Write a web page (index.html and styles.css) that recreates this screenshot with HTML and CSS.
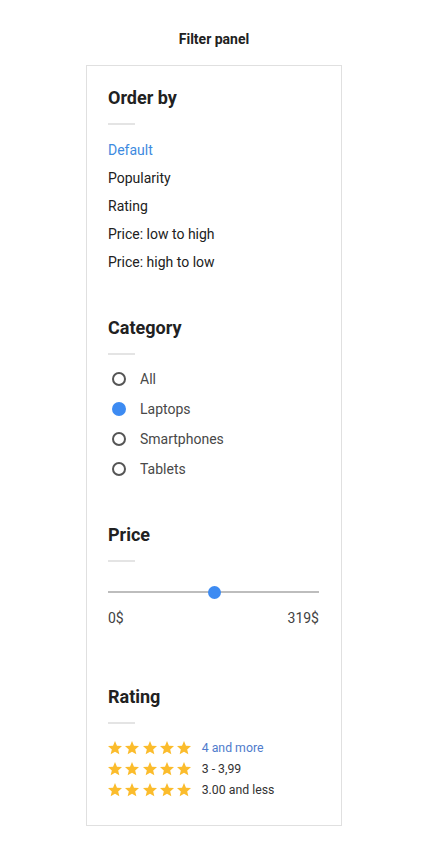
FILE: index.html
```html
<!DOCTYPE html>
<html lang="en">
<head>
<meta charset="utf-8">
<title>Filter panel</title>
<link rel="stylesheet" href="styles.css">
</head>
<body>
<h1 class="page-title">Filter panel</h1>
<div class="panel">
  <section class="section">
    <h2 class="section-title">Order by</h2>
    <div class="divider"></div>
    <ul class="order-list">
      <li class="order-item active">Default</li>
      <li class="order-item">Popularity</li>
      <li class="order-item">Rating</li>
      <li class="order-item">Price: low to high</li>
      <li class="order-item">Price: high to low</li>
    </ul>
  </section>

  <section class="section section-category">
    <h2 class="section-title">Category</h2>
    <div class="divider"></div>
    <ul class="radio-list">
      <li class="radio-item"><span class="radio"></span><span class="radio-label">All</span></li>
      <li class="radio-item"><span class="radio checked"></span><span class="radio-label">Laptops</span></li>
      <li class="radio-item"><span class="radio"></span><span class="radio-label">Smartphones</span></li>
      <li class="radio-item"><span class="radio"></span><span class="radio-label">Tablets</span></li>
    </ul>
  </section>

  <section class="section section-price">
    <h2 class="section-title">Price</h2>
    <div class="divider"></div>
    <div class="slider">
      <div class="track"></div>
      <div class="thumb"></div>
    </div>
    <div class="range-labels"><span>0$</span><span>319$</span></div>
  </section>

  <section class="section section-rating">
    <h2 class="section-title">Rating</h2>
    <div class="divider"></div>
    <ul class="rating-list">
      <li class="rating-item">
        <span class="stars">
          <svg class="star" viewBox="2 2 20 20"><path d="M12 17.27L18.18 21l-1.64-7.03L22 9.24l-7.19-.61L12 2 9.19 8.63 2 9.24l5.46 4.73L5.82 21z"/></svg>
          <svg class="star" viewBox="2 2 20 20"><path d="M12 17.27L18.18 21l-1.64-7.03L22 9.24l-7.19-.61L12 2 9.19 8.63 2 9.24l5.46 4.73L5.82 21z"/></svg>
          <svg class="star" viewBox="2 2 20 20"><path d="M12 17.27L18.18 21l-1.64-7.03L22 9.24l-7.19-.61L12 2 9.19 8.63 2 9.24l5.46 4.73L5.82 21z"/></svg>
          <svg class="star" viewBox="2 2 20 20"><path d="M12 17.27L18.18 21l-1.64-7.03L22 9.24l-7.19-.61L12 2 9.19 8.63 2 9.24l5.46 4.73L5.82 21z"/></svg>
          <svg class="star" viewBox="2 2 20 20"><path d="M12 17.27L18.18 21l-1.64-7.03L22 9.24l-7.19-.61L12 2 9.19 8.63 2 9.24l5.46 4.73L5.82 21z"/></svg>
        </span>
        <span class="rating-label active">4 and more</span>
      </li>
      <li class="rating-item">
        <span class="stars">
          <svg class="star" viewBox="2 2 20 20"><path d="M12 17.27L18.18 21l-1.64-7.03L22 9.24l-7.19-.61L12 2 9.19 8.63 2 9.24l5.46 4.73L5.82 21z"/></svg>
          <svg class="star" viewBox="2 2 20 20"><path d="M12 17.27L18.18 21l-1.64-7.03L22 9.24l-7.19-.61L12 2 9.19 8.63 2 9.24l5.46 4.73L5.82 21z"/></svg>
          <svg class="star" viewBox="2 2 20 20"><path d="M12 17.27L18.18 21l-1.64-7.03L22 9.24l-7.19-.61L12 2 9.19 8.63 2 9.24l5.46 4.73L5.82 21z"/></svg>
          <svg class="star" viewBox="2 2 20 20"><path d="M12 17.27L18.18 21l-1.64-7.03L22 9.24l-7.19-.61L12 2 9.19 8.63 2 9.24l5.46 4.73L5.82 21z"/></svg>
          <svg class="star" viewBox="2 2 20 20"><path d="M12 17.27L18.18 21l-1.64-7.03L22 9.24l-7.19-.61L12 2 9.19 8.63 2 9.24l5.46 4.73L5.82 21z"/></svg>
        </span>
        <span class="rating-label">3 - 3,99</span>
      </li>
      <li class="rating-item">
        <span class="stars">
          <svg class="star" viewBox="2 2 20 20"><path d="M12 17.27L18.18 21l-1.64-7.03L22 9.24l-7.19-.61L12 2 9.19 8.63 2 9.24l5.46 4.73L5.82 21z"/></svg>
          <svg class="star" viewBox="2 2 20 20"><path d="M12 17.27L18.18 21l-1.64-7.03L22 9.24l-7.19-.61L12 2 9.19 8.63 2 9.24l5.46 4.73L5.82 21z"/></svg>
          <svg class="star" viewBox="2 2 20 20"><path d="M12 17.27L18.18 21l-1.64-7.03L22 9.24l-7.19-.61L12 2 9.19 8.63 2 9.24l5.46 4.73L5.82 21z"/></svg>
          <svg class="star" viewBox="2 2 20 20"><path d="M12 17.27L18.18 21l-1.64-7.03L22 9.24l-7.19-.61L12 2 9.19 8.63 2 9.24l5.46 4.73L5.82 21z"/></svg>
          <svg class="star" viewBox="2 2 20 20"><path d="M12 17.27L18.18 21l-1.64-7.03L22 9.24l-7.19-.61L12 2 9.19 8.63 2 9.24l5.46 4.73L5.82 21z"/></svg>
        </span>
        <span class="rating-label">3.00 and less</span>
      </li>
    </ul>
  </section>
</div>
</body>
</html>
```

FILE: styles.css
```css
* { box-sizing: border-box; }

body {
  margin: 0;
  background: #ffffff;
  font-family: Roboto, "Liberation Sans", Arial, sans-serif;
  color: #212121;
}

.page-title {
  margin: 29px 0 16px;
  font-size: 14px;
  line-height: 20px;
  font-weight: 700;
  text-align: center;
  color: #212121;
}

.panel {
  width: 256px;
  margin: 0 auto;
  border: 1px solid #e0e0e0;
  padding: 21px 22px 25px 21px;
}

.section-title {
  margin: 0;
  font-size: 18px;
  line-height: 22px;
  font-weight: 700;
  color: #212121;
}

.divider {
  width: 27px;
  height: 2px;
  margin-top: 14px;
  background: #e4e4e4;
}

.order-list,
.radio-list,
.rating-list {
  list-style: none;
  margin: 0;
  padding: 0;
}

.order-list { margin-top: 11px; }

.order-item {
  font-size: 14px;
  line-height: 28px;
  color: #212121;
}

.order-item.active { color: #3d8ae0; }

.section-category { margin-top: 41px; }

.radio-list { margin-top: 9px; }

.radio-item {
  display: flex;
  align-items: center;
  height: 30px;
}

.radio {
  width: 14px;
  height: 14px;
  margin-left: 4px;
  margin-right: 14px;
  border: 2px solid #555555;
  border-radius: 50%;
  flex-shrink: 0;
}

.radio.checked {
  border-color: #3d8bf2;
  background: #3d8bf2;
}

.radio-label {
  font-size: 14px;
  color: #484848;
}

.section-price { margin-top: 40px; }

.slider {
  position: relative;
  height: 14px;
  margin-top: 23px;
  display: flex;
  align-items: center;
}

.track {
  width: 100%;
  height: 2px;
  background: #bdbdbd;
}

.thumb {
  position: absolute;
  left: calc(50% + 1px);
  top: 50%;
  width: 13px;
  height: 13px;
  margin: -6.5px 0 0 -6.5px;
  border-radius: 50%;
  background: #3d8bf2;
}

.range-labels {
  display: flex;
  justify-content: space-between;
  margin-top: 9px;
  font-size: 14px;
  line-height: 20px;
  color: #424242;
}

.section-rating { margin-top: 58px; }

.rating-list { margin-top: 13px; }

.rating-item {
  display: flex;
  align-items: center;
  height: 21px;
}

.stars {
  display: flex;
  gap: 3.3px;
}

.star {
  width: 14px;
  height: 14px;
  fill: #fbbc2c;
}

.rating-label {
  margin-left: 10.5px;
  font-size: 12.3px;
  color: #333333;
}

.rating-label.active { color: #4f7bcc; }
```
